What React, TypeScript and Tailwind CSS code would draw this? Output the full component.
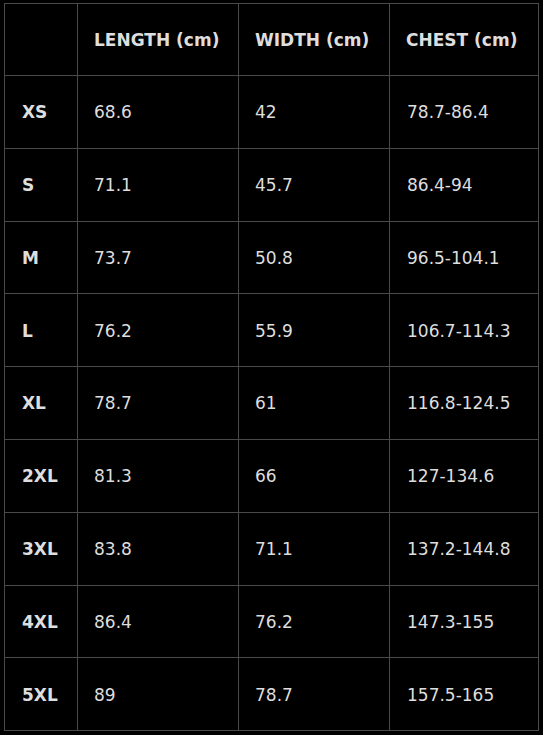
const headers = ["LENGTH (cm)", "WIDTH (cm)", "CHEST (cm)"];

const rows = [
  { size: "XS", length: "68.6", width: "42", chest: "78.7-86.4" },
  { size: "S", length: "71.1", width: "45.7", chest: "86.4-94" },
  { size: "M", length: "73.7", width: "50.8", chest: "96.5-104.1" },
  { size: "L", length: "76.2", width: "55.9", chest: "106.7-114.3" },
  { size: "XL", length: "78.7", width: "61", chest: "116.8-124.5" },
  { size: "2XL", length: "81.3", width: "66", chest: "127-134.6" },
  { size: "3XL", length: "83.8", width: "71.1", chest: "137.2-144.8" },
  { size: "4XL", length: "86.4", width: "76.2", chest: "147.3-155" },
  { size: "5XL", length: "89", width: "78.7", chest: "157.5-165" },
];

const cell = "border border-[#4a4a4a] pl-[16px] pt-[2px] text-left align-middle";

export default function App() {
  return (
    <div className="w-[543px] h-[735px] bg-black pt-[3px] pl-[4px] font-['DejaVu_Sans',sans-serif] text-[17px] text-[#dedede]">
      <table className="border-collapse table-fixed w-[534px]">
        <colgroup>
          <col className="w-[73px]" />
          <col className="w-[161px]" />
          <col className="w-[151px]" />
          <col className="w-[149px]" />
        </colgroup>
        <thead>
          <tr className="h-[72px]">
            <th className={cell}></th>
            {headers.map((h) => (
              <th key={h} className={`${cell} font-bold`}>
                {h}
              </th>
            ))}
          </tr>
        </thead>
        <tbody>
          {rows.map((r) => (
            <tr key={r.size} className="h-[72.8px]">
              <td className={`${cell} pl-[17px] font-bold`}>{r.size}</td>
              <td className={cell}>{r.length}</td>
              <td className={cell}>{r.width}</td>
              <td className={`${cell} pl-[17px]`}>{r.chest}</td>
            </tr>
          ))}
        </tbody>
      </table>
    </div>
  );
}
